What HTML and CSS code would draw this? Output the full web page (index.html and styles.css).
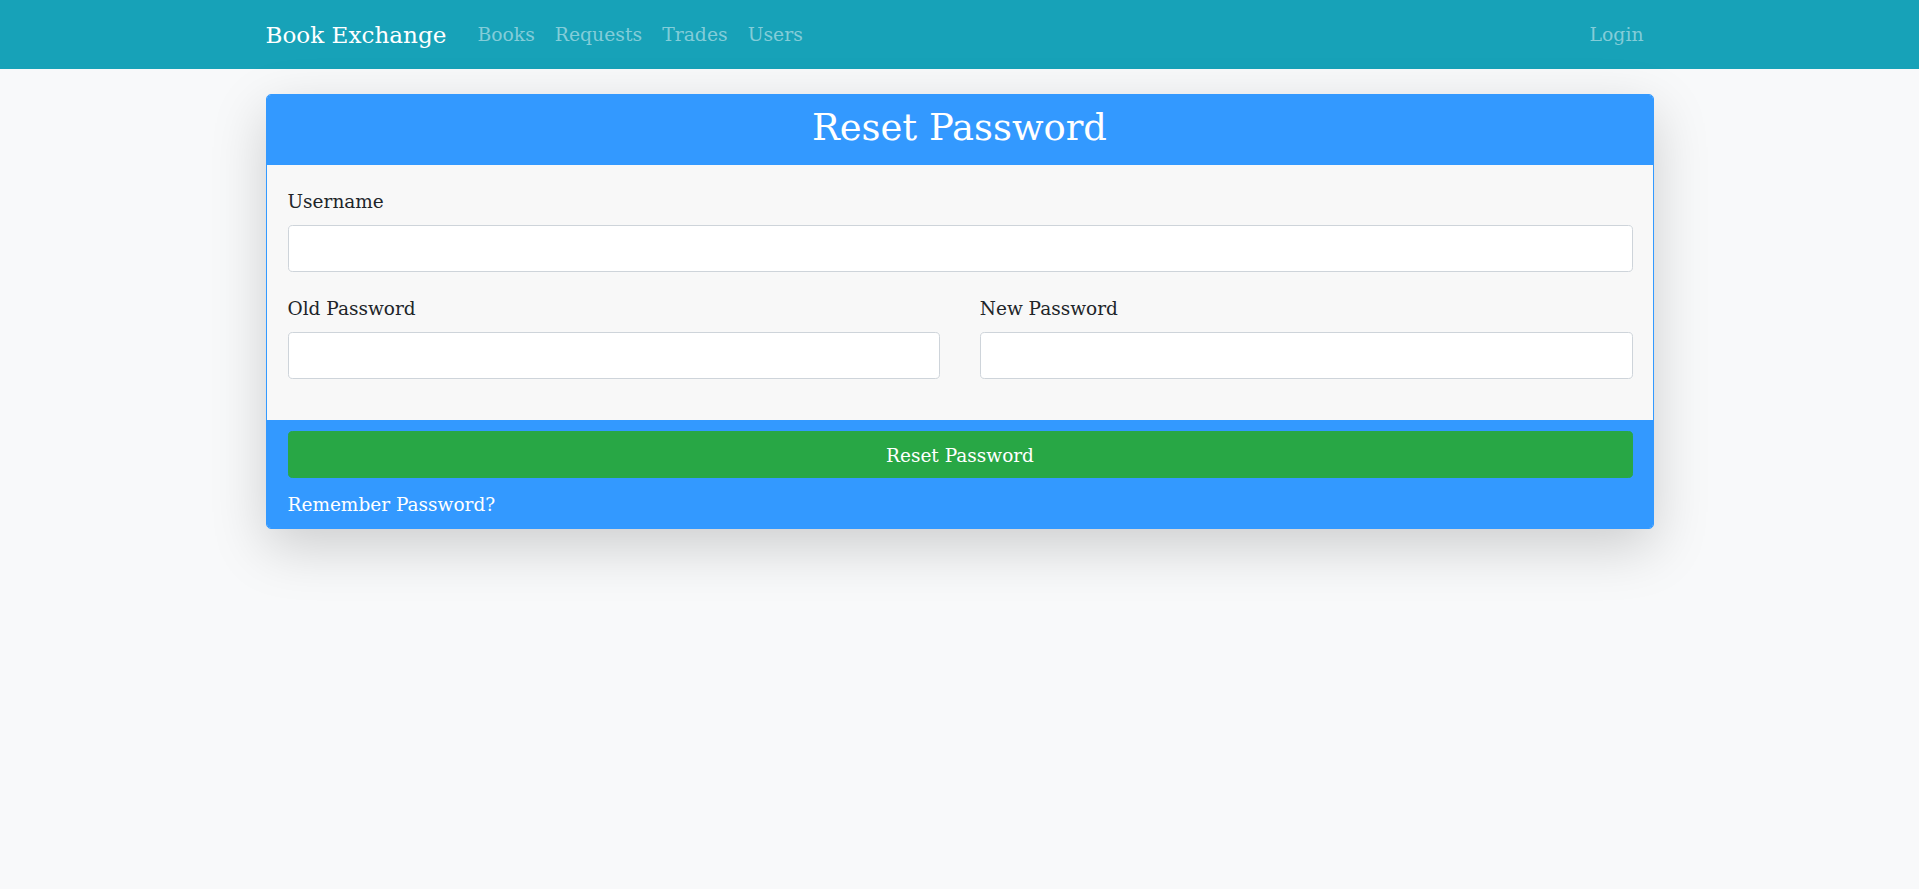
FILE: index.html
```html
<!DOCTYPE html>
<html lang="en">
<head>
<meta charset="utf-8">
<title>Book Exchange - Reset Password</title>
<link rel="stylesheet" href="styles.css">
</head>
<body>
<nav class="navbar">
  <div class="container nav-inner">
    <a class="brand" href="#">Book Exchange</a>
    <ul class="nav-links">
      <li><a class="nav-link" href="#">Books</a></li>
      <li><a class="nav-link" href="#">Requests</a></li>
      <li><a class="nav-link" href="#">Trades</a></li>
      <li><a class="nav-link" href="#">Users</a></li>
    </ul>
    <ul class="nav-links nav-right">
      <li><a class="nav-link" href="#">Login</a></li>
    </ul>
  </div>
</nav>
<main class="container page">
  <form class="card">
    <div class="card-header">
      <h2 class="card-title">Reset Password</h2>
    </div>
    <div class="card-body">
      <div class="form-group">
        <label class="form-label" for="username">Username</label>
        <input class="form-control" id="username" type="text">
      </div>
      <div class="form-row">
        <div class="form-group">
          <label class="form-label" for="oldpw">Old Password</label>
          <input class="form-control" id="oldpw" type="password">
        </div>
        <div class="form-group">
          <label class="form-label" for="newpw">New Password</label>
          <input class="form-control" id="newpw" type="password">
        </div>
      </div>
    </div>
    <div class="card-footer">
      <button class="btn-success" type="button">Reset Password</button>
      <a class="footer-link" href="#">Remember Password?</a>
    </div>
  </form>
</main>
</body>
</html>
```
FILE: styles.css
```css
* { box-sizing: border-box; }

html, body {
  margin: 0;
  padding: 0;
}

body {
  min-height: 100vh;
  background: #f8f9fa;
  font-family: "DejaVu Serif", "Liberation Serif", serif;
  font-size: 18.5px;
  line-height: 1.5;
  color: #212529;
}

a { text-decoration: none; }

.container {
  width: 1388px;
  margin: 0 auto;
}

.page {
  padding-bottom: 120px;
}

/* Navbar */
.navbar {
  background: #17a2b8;
  height: 69px;
}

.nav-inner {
  height: 100%;
  display: flex;
  align-items: center;
  padding-top: 2px;
}

.brand {
  color: #ffffff;
  font-size: 23.1px;
  line-height: 1.5;
  margin-right: 21px;
}

.nav-links {
  list-style: none;
  margin: 0;
  padding: 0;
  display: flex;
}

.nav-right {
  margin-left: auto;
}

.nav-link {
  display: block;
  padding: 0 10px;
  color: rgba(255, 255, 255, 0.47);
  font-size: 18.8px;
}

/* Card */
.card {
  margin-top: 25px;
  border: 1px solid #3399ff;
  border-radius: 5px;
  overflow: hidden;
  background: #f8f8f8;
  box-shadow: 0 18px 55px rgba(0, 0, 0, 0.175);
}

.card-header {
  background: #3399ff;
  padding: 10.5px 20px 15px;
  text-align: center;
}

.card-title {
  margin: 0;
  color: #ffffff;
  font-weight: normal;
  font-size: 36.9px;
  line-height: 1.2;
}

.card-body {
  padding: 23px 20px 0 21px;
}

.form-group {
  margin-bottom: 23px;
}

.form-row .form-group {
  margin-bottom: 41px;
}

.form-row {
  display: grid;
  grid-template-columns: 1fr 1fr;
  column-gap: 39.5px;
}

.form-label {
  display: block;
  margin-bottom: 9.25px;
}

.form-control {
  display: block;
  width: 100%;
  height: 47px;
  padding: 6px 12px;
  font: inherit;
  color: #495057;
  background: #ffffff;
  border: 1px solid #ced4da;
  border-radius: 4.6px;
}

.card-footer {
  background: #3399ff;
  padding: 11px 20px 8.5px 21px;
}

.btn-success {
  display: flex;
  align-items: center;
  justify-content: center;
  width: 100%;
  height: 47px;
  padding: 3px 0 0;
  margin-bottom: 13.5px;
  font: inherit;
  color: #ffffff;
  background: #28a745;
  border: 1px solid #28a745;
  border-radius: 4.6px;
}

.footer-link {
  display: block;
  color: #ffffff;
}
```
